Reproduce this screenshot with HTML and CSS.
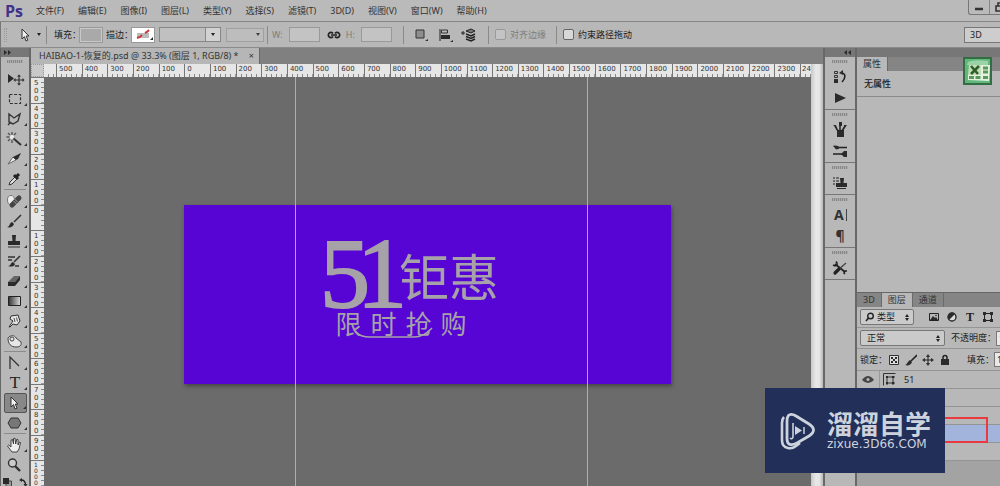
FILE: index.html
```html
<!DOCTYPE html>
<html lang="zh-CN">
<head>
<meta charset="utf-8">
<title>HAIBAO-1-恢复的.psd</title>
<link rel="stylesheet" href="styles.css">
</head>
<body>
<header class="menubar">
  <span class="logo">Ps</span>
  <nav class="menus">
    <button>文件(F)</button><button>编辑(E)</button><button>图像(I)</button><button>图层(L)</button><button>类型(Y)</button><button>选择(S)</button><button>滤镜(T)</button><button>3D(D)</button><button>视图(V)</button><button>窗口(W)</button><button>帮助(H)</button>
  </nav>
  <div class="window-buttons">
    <button aria-label="最小化"><svg width="20" height="14" viewBox="0 0 20 14"><path d="M6 9h8" stroke="#333" stroke-width="2.4"/></svg></button>
    <button aria-label="还原"><svg width="20" height="14" viewBox="0 0 20 14"><path d="M6 6h6v5H6zM8 6V3h6v5" fill="none" stroke="#333" stroke-width="1.6"/></svg></button>
  </div>
</header>

<section class="options">
  <span class="grip-v"></span>
  <button class="current-tool" aria-label="路径选择"><svg width="12" height="14" viewBox="0 0 12 14"><path d="M3 1v10l2.4-2.3L7 13l1.8-.8L7.2 8H10z" fill="#eee" stroke="#333"/></svg></button>
  <span class="caret"></span>
  <span class="rule first"></span>
  <span class="label">填充：</span>
  <button class="swatch" aria-label="填充颜色"></button>
  <span class="label stroke">描边：</span>
  <button class="swatch none" aria-label="描边颜色"><svg width="20" height="13" viewBox="0 0 20 13"><path d="M4 5h12v5H4z" fill="#bbb"/><path d="M4 10l3-1 2-2M12 5l2-1 2-2" fill="none" stroke="#c8393b" stroke-width="2"/><path d="M17 12h3v-3z"/></svg></button>
  <div class="combo"><input aria-label="描边宽度"><button aria-label="选择宽度"><span class="caret"></span></button></div>
  <button class="line-style" aria-label="线型"><span class="caret"></span></button>
  <span class="rule"></span>
  <label class="size dim">W:<input></label>
  <svg class="link" width="14" height="10" viewBox="0 0 14 10"><path d="M6 3.4a2.6 2.6 0 1 0 0 3.2M8 3.4a2.6 2.6 0 1 1 0 3.2M4 5h6" fill="none" stroke="#222" stroke-width="1.7"/></svg>
  <label class="size dim height">H:<input></label>
  <span class="rule second"></span>
  <button class="op" aria-label="路径操作"><svg width="16" height="16" viewBox="0 0 16 16"><path d="M3 3h8v8H3z" fill="#8d8d8d" stroke="#333"/><path d="M12 14h3v-2z"/></svg></button>
  <button class="op" aria-label="路径对齐"><svg width="16" height="16" viewBox="0 0 16 16"><path d="M3 2v12" stroke="#222"/><path d="M4.500 3h6v3h-6z" fill="none" stroke="#333"/><path d="M4 8h9v4H4z"/><path d="M13 15h3v-2z"/></svg></button>
  <button class="op" aria-label="路径排列"><svg width="16" height="16" viewBox="0 0 16 16"><path d="M0 6h4M2 4v4" stroke="#222"/><path d="M5 4l5-2 4 2-4 2z" fill="#777" stroke="#222"/><path d="M5 7l5 2 4-2M5 9.500l5 2 4-2M5 12l5 2 4-2" fill="none" stroke="#222" stroke-width="1.400"/></svg></button>
  <span class="rule third"></span>
  <label class="check dim"><input type="checkbox" disabled>对齐边缘</label>
  <span class="rule third"></span>
  <label class="check"><input type="checkbox">约束路径拖动</label>
  <select class="workspace" aria-label="工作区"><option>3D</option></select>
</section>

<main class="app">
  <aside class="tools">
    <div class="column-head"><svg width="8" height="5" viewBox="0 0 8 5"><path d="M0 0l3 2.500L0 5zM4 0l3 2.500L4 5z"/></svg></div>
    <div class="grip"></div>
    <button aria-label="移动"><svg viewBox="0 0 20 16"><path d="M3 3v9l6-4.500z"/><path d="M14 5v8M10 9h8" stroke="#333" stroke-width="1.200"/><path d="M14 3.500l2 2h-4zM14 14.500l2-2h-4zM8.500 9l2-2v4zM19.500 9l-2-2v4z"/></svg></button>
    <button aria-label="选框" class="more"><svg viewBox="0 0 20 16"><path d="M4.500 3.500h11v9h-11z" fill="none" stroke="#333" stroke-width="1.200" stroke-dasharray="3 1.600"/></svg></button>
    <button aria-label="套索" class="more"><svg viewBox="0 0 20 16"><path d="M4 3l5 4 6-4-2 7-5 3-4-2zM6 11l-3 3" fill="none" stroke="#333" stroke-width="1.400"/></svg></button>
    <button aria-label="魔棒" class="more"><svg viewBox="0 0 20 16"><path d="M8 7l8 7" stroke="#333" stroke-width="2"/><path d="M7 1v3M7 9v3M1.500 6h3M3 2l2 2M3 10l2-2M11 2L9 4" stroke="#555" stroke-width="1.400"/><circle cx="7" cy="6" r="2" fill="#eee"/></svg></button>
    <button aria-label="切片" class="more"><svg viewBox="0 0 20 16"><path d="M3 13l5-7 3 3z" fill="#eee" stroke="#666"/><path d="M8 6l8-4-3 6-2 1z"/></svg></button>
    <button aria-label="吸管" class="more"><svg viewBox="0 0 20 16"><path d="M4 14l1-3 5-5 2 2-5 5z" fill="#ddd" stroke="#333"/><path d="M9 4l4 4M11 6l3-3" stroke="#222" stroke-width="3"/></svg></button>
    <hr>
    <button aria-label="修复画笔" class="more"><svg viewBox="0 0 20 16"><ellipse cx="6" cy="7" rx="3.500" ry="4.500" fill="#eee" stroke="#777"/><path d="M7 12l7-7" stroke="#444" stroke-width="5" stroke-linecap="round"/><path d="M8.500 8l3 3M9.500 6l3 3" stroke="#bbb" stroke-width=".8"/></svg></button>
    <button aria-label="画笔" class="more"><svg viewBox="0 0 20 16"><path d="M9 9l7-7" stroke="#333" stroke-width="1.600"/><path d="M2 14c3 0 2-4 5-5l2 2c-1 3-4 4-7 3z"/></svg></button>
    <button aria-label="图章" class="more"><svg viewBox="0 0 20 16"><path d="M7 2h4l-.5 6H15v4H3V8h4.500z"/><path d="M3 14h12" stroke="#333"/></svg></button>
    <button aria-label="历史画笔" class="more"><svg viewBox="0 0 20 16"><path d="M9 9l6-6" stroke="#333" stroke-width="1.600"/><path d="M3 13c3 0 2-3 5-4l2 2c-1 3-4 3-7 2z"/><path d="M3 4h7M3 7h4M10 13h4" stroke="#333" stroke-width="1.500"/></svg></button>
    <button aria-label="橡皮擦" class="more"><svg viewBox="0 0 20 16"><path d="M3 9l6-6h6l-5 6z" fill="#666"/><path d="M3 9h7v4H3zM10 9l5-6v4l-5 6z"/></svg></button>
    <button aria-label="渐变" class="more"><svg viewBox="0 0 20 16"><defs><linearGradient id="fade"><stop stop-color="#333"/><stop offset="1" stop-color="#ddd"/></linearGradient></defs><path d="M3.500 3.500h12v9h-12z" fill="url(#fade)" stroke="#222"/></svg></button>
    <button aria-label="涂抹" class="more"><svg viewBox="0 0 20 16"><path d="M4 14l4-6-3-2 1-3 7-1 2 6-3 4-4-1-3 3z" fill="#e4e4e4" stroke="#333"/><path d="M9 5l1 4M11.500 4.500l1 4" stroke="#555"/></svg></button>
    <button aria-label="海绵" class="more"><svg viewBox="0 0 20 16"><path d="M3 5c2-3 7-3 8 0l5 4c1 4-2 5-5 5-5 0-8-3-8-9z" fill="#e6e6e6" stroke="#444"/><circle cx="7" cy="6" r="2" fill="none" stroke="#444"/></svg></button>
    <hr>
    <button aria-label="钢笔" class="more"><svg viewBox="0 0 20 16"><path d="M5 14V2l9 9" fill="none" stroke="#333" stroke-width="1.300"/></svg></button>
    <button aria-label="文字" class="more type">T</button>
    <button aria-label="路径选择工具" class="more active"><svg viewBox="0 0 20 16"><path d="M6 2v10l2.500-2.500L10 14l2-.8L10.300 9H13z" fill="#f2f2f2" stroke="#333"/></svg></button>
    <button aria-label="多边形" class="more"><svg viewBox="0 0 20 16"><path d="M6 3h7l3 5-3 5H6L3 8z" fill="#777" stroke="#333"/></svg></button>
    <hr>
    <button aria-label="抓手" class="more"><svg viewBox="0 0 20 16"><path d="M7 15L2.500 9l1.200-1L6 10V3l1.500-.5L8.500 7V1.500L10 1.200 10.700 7l1-4.700 1.300.4L13 8l1.500-3 1 .5L14 12l-2 3z" fill="#eee" stroke="#333" stroke-width=".9"/></svg></button>
    <button aria-label="缩放"><svg viewBox="0 0 20 16"><path d="M10 9l5 5" stroke="#333" stroke-width="2.400"/><circle cx="7.500" cy="6" r="4" fill="#ccc" stroke="#333" stroke-width="1.400"/></svg></button>
    <div class="defaults"><svg width="9" height="9" viewBox="0 0 9 9"><path d="M3 3h5.500v5.500H3z" fill="#999" stroke="#444"/><path d="M0 0h6v6H0z"/></svg><svg width="9" height="9" viewBox="0 0 9 9"><path d="M2 2c3 0 4.500 2 4.500 5" fill="none" stroke="#222" stroke-width="1.300"/><path d="M0 2l3-2v4zM6.500 9l2-3h-4z"/></svg></div>
  </aside>

  <section class="document">
    <div class="doc-tabs"><div class="doc-tab">HAIBAO-1-恢复的.psd @ 33.3% (图层 1, RGB/8) *<button aria-label="关闭">×</button></div></div>
    <div class="viewport">
      <div class="corner"></div>
      <div class="ruler-x">
        <i></i><span>500</span><span>400</span><span>300</span><span>200</span><span>100</span><span>0</span><span>100</span><span>200</span><span>300</span><span>400</span><span>500</span><span>600</span><span>700</span><span>800</span><span>900</span><span>1000</span><span>1100</span><span>1200</span><span>1300</span><span>1400</span><span>1500</span><span>1600</span><span>1700</span><span>1800</span><span>1900</span><span>2000</span><span>2100</span><span>2200</span><span>2300</span><span class="cut">24</span>
      </div>
      <div class="ruler-y">
        <span>500</span><span>400</span><span>300</span><span>200</span><span>100</span><span>0</span><span>100</span><span>200</span><span>300</span><span>400</span><span>500</span><span>600</span><span>700</span><span>800</span><span>900</span><span class="long">1000</span>
      </div>
      <div class="canvas">
        <div class="artboard">
          <div class="headline"><span class="five">5</span><span class="one">1</span><span class="sale">钜惠</span></div>
          <div class="subline"><span>限</span><span>时</span><span>抢</span><span>购</span></div>
          <svg class="swoosh" width="96" height="24" viewBox="0 0 96 24"><path d="M6 17q4 5 14 5h44q10 0 18-9" fill="none" stroke="#a6a2a8" stroke-width="1.600"/></svg>
        </div>
        <div class="guide left"></div>
        <div class="guide right"></div>
      </div>
      <div class="scroll"></div>
    </div>
  </section>

  <aside class="dock">
    <div class="column-head"><svg width="8" height="5" viewBox="0 0 8 5"><path d="M3 0L0 2.500 3 5zM7 0L4 2.500 7 5z"/></svg></div>
    <div class="dock-group"><div class="grip"></div>
      <button aria-label="历史记录"><svg viewBox="0 0 16 16"><path d="M2.500 2.500h3v2h-3zM2.500 6.500h3v2h-3z" fill="none" stroke="#333"/><path d="M2 10h4v4H2z"/><path d="M9 4c5 0 5 5 1 9" fill="none" stroke="#222" stroke-width="1.600"/><path d="M7 4l4-3v5z"/></svg></button>
      <button aria-label="动作"><svg viewBox="0 0 16 16"><path d="M3 3l11 5-11 5z"/></svg></button>
    </div>
    <div class="dock-group"><div class="grip"></div>
      <button aria-label="画笔面板"><svg viewBox="0 0 16 16"><path d="M5 8h7v7H5z"/><path d="M6 9L3 4M8 9V3M10 9l3-5" stroke="#222" stroke-width="1.500"/><path d="M1 3l3 0 1 3zM7 0h3v4H7zM12 3l3 0-3 4z"/></svg></button>
      <button aria-label="画笔预设"><svg viewBox="0 0 16 16"><path d="M6 4.500h9M1 11h9" stroke="#222" stroke-width="1.600"/><path d="M1 3c3-1 5 0 7 1.500-2 2.500-5 2.500-5 .5zM9 11l3-3h3v6h-3z"/></svg></button>
    </div>
    <div class="dock-group"><div class="grip"></div>
      <button aria-label="仿制源"><svg viewBox="0 0 16 16"><path d="M1 3h2M4 3h3M1 6h2M4 6h3M1 9h2" stroke="#222" stroke-width="1.200"/><path d="M8 3h4l-.5 5H15v4H4V8h4.500zM5 13h9v1H5z"/></svg></button>
    </div>
    <div class="dock-group"><div class="grip"></div>
      <button aria-label="字符"><svg viewBox="0 0 16 16"><path d="M14.500 2v12" stroke="#444"/></svg><b>A</b></button>
      <button aria-label="段落"><b>¶</b></button>
    </div>
    <div class="dock-group"><div class="grip"></div>
      <button aria-label="工具预设"><svg viewBox="0 0 16 16"><path d="M3 4l10 8" stroke="#222" stroke-width="1.800"/><path d="M14 3l-8 7" stroke="#444" stroke-width="1.300"/><path d="M7 9l-4 4" stroke="#222" stroke-width="3.200" stroke-linecap="round"/><path d="M1 5l2 1 2-1V3L4 1.500M15 11l-2 0-1 2 1 1" fill="none" stroke="#222" stroke-width="1.500"/></svg></button>
    </div>
  </aside>

  <aside class="panels">
    <div class="column-head"></div>
    <section class="properties">
      <div class="tabs"><button class="on">属性</button></div>
      <h2>无属性</h2>
      <svg class="sheet" width="29" height="28" viewBox="0 0 29 28"><path d="M1 1h27v26H1z" fill="#62b77b" stroke="#326d43" stroke-width="2"/><path d="M5 5q6-3 20-1v4H4z" fill="#9bd2a8"/><path d="M18 8l9 0-1 16-21-1 0-5 13-1z" fill="#e5f1df"/><path d="M6 8h12v10H5z" fill="#c2dfb6"/><path d="M8 9l7 8M16 9l-8 8" stroke="#315f2c" stroke-width="2.600"/><path d="M20 11h5M20 15h5M6 20.500h5M12.500 20.500h5M20 20.500h5" stroke="#589a5c" stroke-width="2.800"/></svg>
    </section>
    <section class="layers">
      <div class="tabs"><button>3D</button><button class="on">图层</button><button>通道</button></div>
      <div class="row filter">
        <div class="pick kind"><svg width="10" height="10" viewBox="0 0 10 10"><circle cx="5.500" cy="4" r="2.800" fill="none" stroke="#222" stroke-width="1.400"/><path d="M3.500 6L1 9" stroke="#222" stroke-width="1.600"/></svg><select aria-label="筛选类型"><option>类型</option></select><span class="updown"></span></div>
        <button aria-label="像素图层"><svg viewBox="0 0 12 12"><path d="M1.500 2.500h9v7h-9z" fill="none" stroke="#222"/><path d="M2 9l3-4 2 2 1-1 2 3z"/><circle cx="8" cy="4.500" r=".8"/></svg></button>
        <button aria-label="调整图层"><svg viewBox="0 0 12 12"><circle cx="6" cy="6" r="4" fill="#ddd" stroke="#222" stroke-width="1.300"/><path d="M3 9l6-6a4 4 0 0 0-6 6z"/></svg></button>
        <button aria-label="文字图层" class="serif">T</button>
        <button aria-label="形状图层"><svg viewBox="0 0 12 12"><path d="M2.500 2.500h7v7h-7z" fill="none" stroke="#222"/><path d="M1 1h3v3H1zM8 1h3v3H8zM1 8h3v3H1zM8 8h3v3H8z"/></svg></button>
      </div>
      <div class="row blend">
        <div class="pick mode"><select aria-label="混合模式"><option>正常</option></select><span class="updown"></span></div>
        <label>不透明度：<input value="100%"></label>
      </div>
      <div class="row lock">
        <span>锁定：</span>
        <button aria-label="锁定透明像素"><svg viewBox="0 0 12 12"><path d="M1.500 1.500h9v9h-9z" fill="#ddd" stroke="#333"/><path d="M3 3h2v2H3zM7 3h2v2H7zM5 5h2v2H5zM3 7h2v2H3zM7 7h2v2H7z"/></svg></button>
        <button aria-label="锁定图像像素"><svg viewBox="0 0 12 12"><path d="M6 7l6-6" stroke="#222" stroke-width="1.600"/><path d="M0 11c2 0 2-3 5-5l2 2c-1 3-4 4-7 3z"/></svg></button>
        <button aria-label="锁定位置"><svg viewBox="0 0 12 12"><path d="M6 2v8M2 6h8" stroke="#222"/><path d="M6 0l2 3H4zM6 12l2-3H4zM0 6l3-2v4zM12 6L9 4v4z"/></svg></button>
        <button aria-label="锁定全部"><svg viewBox="0 0 12 12"><path d="M2 5h8v6H2z"/><path d="M4 5V3.500a2 2 0 0 1 4 0V5" fill="none" stroke="#222" stroke-width="1.500"/></svg></button>
        <label>填充：<input value="100%"></label>
      </div>
      <ul class="layer-list">
        <li><span class="eye"><svg width="12" height="9" viewBox="0 0 12 9"><path d="M0 5q6-8 12 0-6 6-12 0z" fill="#444"/><circle cx="6" cy="4.500" r="1.500" fill="#bbb"/></svg></span><svg class="thumb" width="13" height="13" viewBox="0 0 13 13"><path d="M.5 12.500V.5h12M4 3v9M10 3v9M3 4h9M3 10h9" fill="none" stroke="#333"/><path d="M3 3h2v2H3zM9 3h2v2H9zM3 9h2v2H3zM9 9h2v2H9z"/></svg>51</li>
        <li></li><li></li><li class="selected"></li><li></li>
      </ul>
    </section>
  </aside>
</main>

<div class="highlight"></div>
<div class="brand">
  <svg width="36" height="38" viewBox="0 0 36 38"><path d="M4 5Q2 7 2 11v17q0 7 6 8 4 1 8-2l4-3" fill="none" stroke="#cdd3dd" stroke-width="2.600"/><path d="M7 9c0-7 4-8 9-5l13 8c6 4 6 8 0 12l-12 7c-6 3-10 2-10-4z" fill="none" stroke="#cdd3dd" stroke-width="2.800"/><path d="M10 26q2 2 3-1V11" fill="none" stroke="#cdd3dd" stroke-width="1.600"/><path d="M15 14v9l7-4.500z" fill="#cdd3dd"/><path d="M24 15v7" stroke="#cdd3dd" stroke-width="1.500"/></svg>
  <div class="brand-text"><strong>溜溜自学</strong><span>zixue.3D66.COM</span></div>
</div>
</body>
</html>
```
FILE: styles.css
```css
* { box-sizing: border-box; }
body {
  margin: 0; height: 100vh; overflow: hidden;
  display: flex; flex-direction: column;
  background: #b8b8b8; color: #222;
  font: 9px/12px "Noto Sans", "Noto Sans CJK SC", sans-serif;
}
button, input, select { font: inherit; color: inherit; border: 0; padding: 0; margin: 0; background: none; border-radius: 0; }
button { display: inline-flex; align-items: center; justify-content: center; flex: none; }
svg { display: block; flex: none; fill: #2b2b2b; }
select { appearance: none; }

.menubar { display: flex; flex: none; align-items: center; height: 22px; border-bottom: 1px solid #858585; background: #bababa; }
.logo { width: 31px; padding-left: 5px; font: bold 16px/20px "Open Sans", sans-serif; color: #40328a; }
.menus { display: flex; gap: 14px; padding-left: 5px; flex: 1; color: #333; }
.window-buttons { display: flex; width: 32px; align-self: flex-start; overflow: hidden; border: 1px solid #777; border-width: 0 0 1px 1px; border-radius: 0 0 0 3px; }
.window-buttons button { border-right: 1px solid #888; }

.options { display: flex; flex: none; align-items: center; height: 26px; border-bottom: 1px solid #8b8b8b; border-left: 1px solid #777; color: #222; white-space: nowrap; }
.dim { color: #7d7d7d; }
.grip-v { width: 3px; height: 14px; margin: 0 12px 0 3px; border: dotted #999; border-width: 0 1px; }
.current-tool { width: 12px; margin-right: 6px; }
.caret { width: 0; height: 0; border: 2px solid transparent; border-top: 3px solid #222; border-bottom: 0; }
.rule { width: 1px; height: 18px; background: #8a8a8a; flex: none; }
.first { margin: 0 7px 0 5px; }
.swatch { width: 22px; height: 14px; background: #a9a9a9; border: 1px solid #c9c9c9; outline: 1px solid #999; }
.label { width: 26px; }
.label.stroke { margin-left: 4px; }
.swatch.none { background: #fff; border-color: #fff; }
.combo { display: flex; width: 62px; height: 15px; margin: 0 5px; border: 1px solid #888; }
.combo input { flex: 1; min-width: 0; background: #c0c0c0; }
.combo button { width: 15px; background: #d2d2d2; border-left: 1px solid #888; }
.line-style { width: 38px; height: 14px; justify-content: flex-end; padding-right: 3px; border: 1px solid #999; background: #bfbfbf; opacity: .8; margin-right: 3px; }
.size { display: flex; align-items: center; gap: 6px; padding-left: 4px; }
.size input { width: 31px; height: 15px; border: 1px solid #999; background: #c3c3c3; }
.link { margin: 0 2px 0 7px; }
.height { padding-left: 3px; }
.second { margin: 0 9px 0 11px; }
.op { width: 16px; margin-right: 8px; }
.third { margin: 0 6px 0 3px; }
.check { display: flex; align-items: center; gap: 4px; }
.check + .third { margin-left: 10px; }
.check input { appearance: none; width: 11px; height: 11px; border: 1px solid #666; background: #d8d8d8; border-radius: 2px; }
.check input:disabled { border-color: #999; background: #c4c4c4; }
.workspace { margin-left: auto; width: 36px; height: 16px; padding-left: 5px; border: 1px solid #777; border-right: 0; background: #cdcdcd; }

.app { display: flex; flex: 1; min-height: 0; }
.column-head { flex: none; height: 9px; padding: 2px 3px; background: #777; }
.grip { width: 16px; height: 3px; background: repeating-linear-gradient(90deg, #888 0 1px, #aaa 1px 2px); }

.tools { display: flex; flex: none; flex-direction: column; align-items: center; width: 31px; border: solid #686868; border-width: 0 2px 0 1px; background: #b8b8b8; overflow: hidden; }
.tools .column-head { width: 100%; }
.tools .grip { flex: none; margin: 3px 0 6px; }
.tools button { position: relative; width: 23px; height: 20px; }
.tools button svg { width: 20px; height: 16px; }
.tools hr { flex: none; width: 22px; height: 2px; margin: 0; border: 0; border-top: 1px solid #8b8b8b; }
.more::after { content: ""; position: absolute; right: 0; bottom: 3px; border: solid transparent; border-width: 3px 0 0 3px; border-bottom: 0; border-right: 3px solid #333; border-left: 0; }
.tools .type { font: 17px/20px "Liberation Serif", serif; }
.tools .active { background: #888; border: 1px solid #555; border-radius: 2px; }
.defaults { display: flex; gap: 7px; padding-top: 3px; }

.document { display: flex; flex: 1; flex-direction: column; min-width: 0; }
.doc-tabs { display: flex; flex: none; height: 16px; background: #808080; }
.doc-tab { display: flex; align-items: center; justify-content: space-between; width: 229px; padding: 0 5px 0 8px; background: #b6b6b6; border-right: 1px solid #666; color: #333; white-space: nowrap; }
.viewport { flex: 1; display: grid; grid-template: 13px 1fr / 13px 1fr 12px; min-height: 0; }
.corner { background: #c9c9c9; border: 1px dotted #999; }
.ruler-x, .ruler-y { display: flex; overflow: hidden; background-color: #e6e6e6; color: #333; }
.ruler-x span { flex: 1 0 0; min-width: 0; padding-left: 2px; border-left: 1px solid #777; font: 7px/10px "DejaVu Sans", sans-serif; background: repeating-linear-gradient(90deg, transparent 0 4px, #888 4px 5px) bottom / 100% 3px no-repeat; }
.ruler-x i { flex: 0 0 12px; background: repeating-linear-gradient(90deg, transparent 0 4px, #888 4px 5px) bottom / 100% 3px no-repeat; }
.ruler-x .cut { flex: 0 0 11px; padding-left: 1px; }
.ruler-y { flex-direction: column; }
.ruler-y span { flex: 1 0 0; min-height: 0; width: 13px; padding: 1px 5px 0 3px; border-top: 1px solid #777; word-break: break-all; font: 7px/8px "DejaVu Sans", sans-serif; background: repeating-linear-gradient(180deg, transparent 0 4px, #888 4px 5px) right / 3px 100% no-repeat; }
.ruler-y span.long { font-size: 6px; line-height: 6px; padding-right: 6px; }
.canvas { position: relative; overflow: hidden; background: #6b6b6b; }
.scroll { grid-column: 3; grid-row: 1 / 3; background: linear-gradient(90deg, #c8c8c8, #e8e8e8 40%, #e4e4e4 70%, #b8b8b8); }
.artboard { position: absolute; left: 140px; top: 128px; width: 487px; height: 179px; background: #5605d5; box-shadow: 1px 2px 4px #444; color: #a6a2a8; }
.guide { position: absolute; top: 0; bottom: 0; width: 1px; background: #3fe0d0; }
.guide.left { left: 251px; }
.guide.right { left: 543px; }
.headline { position: absolute; left: 136px; top: 31px; display: flex; align-items: center; height: 76px; }
.five, .one { font: 100px/76px "Liberation Serif", serif; width: 37px; -webkit-text-stroke: 2px #a6a2a8; }
.one { width: 42px; }
.sale { font: 400 50px/64px "Noto Sans CJK SC", sans-serif; }
.subline { position: absolute; left: 147px; top: 104px; display: grid; grid-template-columns: repeat(4, 35px); justify-items: center; font: 400 26px/28px "Noto Sans CJK SC", sans-serif; }
.swoosh { position: absolute; left: 166px; top: 110px; }

.dock { display: flex; flex: none; flex-direction: column; width: 34px; border: solid #686868; border-width: 0 2px; background: #b8b8b8; }
.dock .column-head { display: flex; justify-content: flex-end; }
.dock-group { display: flex; flex-direction: column; align-items: center; padding: 3px 0 1px; border-bottom: 1px solid #777; }
.dock-group .grip { margin-bottom: 3px; }
.dock-group button { position: relative; width: 22px; height: 21px; }
.dock-group button svg { width: 16px; height: 16px; }
.dock-group button b { font: bold 14px/20px "Noto Sans", sans-serif; color: #333; }
.dock-group svg + b { position: absolute; left: 5px; }

.panels { display: flex; flex: none; flex-direction: column; width: 143px; background: #b8b8b8; }
.properties { position: relative; flex: 1; }
.tabs { display: flex; height: 14px; background: #858585; }
.tabs button { padding: 0 6px; border-right: 1px solid #6b6b6b; color: #333; }
.tabs .on { background: #b8b8b8; }
.properties h2 { margin: 0; height: 26px; padding: 0 7px; font: 500 9px/26px "Noto Sans CJK SC", sans-serif; border-bottom: 1px solid #8b8b8b; }
.sheet { position: absolute; left: 106px; top: 0; }
.layers { display: flex; flex: 0 0 194px; flex-direction: column; border-top: 1px solid #666; background: #a3a3a3; overflow: hidden; white-space: nowrap; }
.layers .tabs { flex: none; }
.row { display: flex; flex: none; align-items: center; height: 21px; padding-left: 3px; background: #b8b8b8; border-bottom: 1px solid #959595; }
.row.lock { height: 22px; }
.row button { width: 12px; height: 12px; }
.row button svg { width: 12px; height: 12px; }
.pick { display: flex; flex: none; align-items: center; height: 16px; padding: 0 4px; border: 1px solid #777; border-radius: 2px; background: #cacaca; }
.pick select { flex: 1; min-width: 0; padding-left: 2px; }
.kind { width: 54px; margin-right: 8px; }
.mode { width: 85px; margin-right: 6px; }
.updown::before, .updown::after { content: ""; display: block; border: 2px solid transparent; }
.updown::before { border-bottom: 3px solid #222; border-top: 0; margin-bottom: 1px; }
.updown::after { border-top: 3px solid #222; border-bottom: 0; }
.filter { gap: 6px; }
.row .serif { font: bold 12px/12px "Liberation Serif", serif; }
.row label { display: flex; flex: none; align-items: center; }
.row input { width: 30px; height: 15px; padding-left: 2px; border: 1px solid #777; background: #e8e8e8; }
.lock { gap: 5px; }
.lock span { width: 23px; }
.lock label { margin-left: auto; margin-right: -24px; }
.layer-list { margin: 0; padding: 0; list-style: none; }
.layer-list li { display: flex; align-items: center; height: 18px; background: #b8b8b8; border-bottom: 1px solid #949494; }
.layer-list .selected { background: #a3b4dc; }
.eye { display: flex; align-items: center; width: 23px; height: 100%; padding-left: 5px; border-right: 1px solid #999; }
.thumb { margin: 0 8px 0 3px; }

.highlight { position: absolute; right: 12px; bottom: 43px; width: 60px; height: 26px; border: 2px solid #eb3a3f; }
.brand { position: absolute; right: 55px; bottom: 13px; display: flex; align-items: center; gap: 11px; width: 180px; height: 85px; padding-left: 15px; background: #222f58; color: #cdd3dd; }
.brand::before, .brand::after { content: ""; position: absolute; z-index: -1; top: -8px; left: 76px; width: 12px; height: 16px; border-radius: 6px 6px 0 0; background: #eee; }
.brand::after { left: 91px; }
.brand-text { display: flex; flex-direction: column; padding-bottom: 1px; }
.brand strong { font: 700 26px/28px "Noto Sans CJK SC", sans-serif; }
.brand-text span { font: 12px/14px "DejaVu Sans", sans-serif; }
```
